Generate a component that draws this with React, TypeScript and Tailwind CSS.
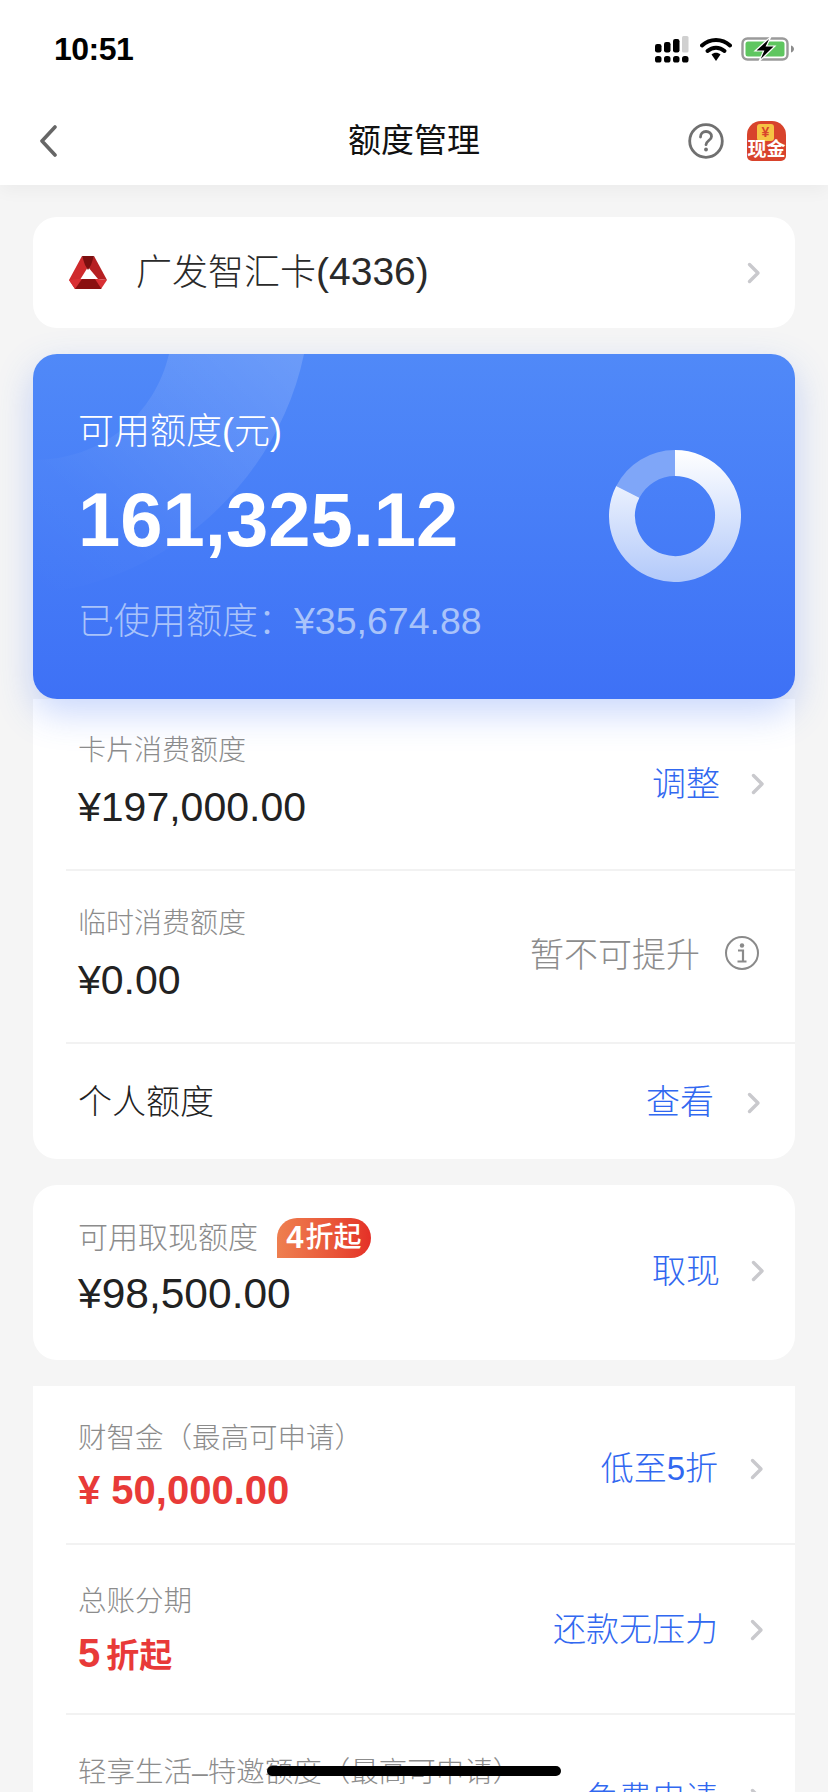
import React from "react";

const blue = "text-[#3168f0]";

function Chevron({ className = "" }: { className?: string }) {
  return (
    <svg viewBox="0 0 14 22" className={`w-[14px] h-[22px] shrink-0 ${className}`} fill="none">
      <path d="M2.5 2.5 11 11 2.5 19.5" stroke="#c9c9cd" strokeWidth="3.4" strokeLinecap="round" strokeLinejoin="round" />
    </svg>
  );
}

function Signal() {
  return (
    <svg viewBox="0 0 34 27" className="w-[34px] h-[27px]">
      <rect x="0" y="8" width="6.500" height="8.500" rx="2.200" fill="#000" />
      <rect x="9" y="6" width="6.500" height="10.500" rx="2.200" fill="#000" />
      <rect x="18" y="3" width="6.500" height="13.500" rx="2.200" fill="#000" />
      <rect x="27" y="0" width="6.500" height="16.500" rx="1.500" fill="#d0d0d0" />
      <rect x="0" y="20" width="6.500" height="6.500" rx="2.600" fill="#000" />
      <rect x="9" y="20" width="6.500" height="6.500" rx="2.600" fill="#000" />
      <rect x="18" y="20" width="6.500" height="6.500" rx="2.600" fill="#000" />
      <rect x="27" y="20" width="6.500" height="6.500" rx="2.600" fill="#000" />
    </svg>
  );
}

function Wifi() {
  return (
    <svg viewBox="0 0 32 24" className="w-[32px] h-[24px]" fill="none">
      <path d="M2 8.500C10 1 22 1 30 8.500" stroke="#000" strokeWidth="4" strokeLinecap="round" />
      <path d="M7.500 14C12.500 9.600 19.500 9.600 24.500 14" stroke="#000" strokeWidth="4" strokeLinecap="round" />
      <path d="M11.500 17.500 16 24l4.500-6.500C18 15.200 14 15.200 11.500 17.500Z" fill="#000" />
    </svg>
  );
}

function Battery() {
  return (
    <svg viewBox="0 0 54 26" className="w-[54px] h-[26px]">
      <rect x="1.500" y="2.500" width="45" height="21" rx="5" fill="#fff" stroke="#9a9a9a" strokeWidth="2.400" />
      <rect x="4.500" y="5.500" width="39" height="15" rx="2.500" fill="#5fc660" />
      <path d="M50 9.500c2 .6 3 2 3 3.500s-1 2.900-3 3.500z" fill="#8c8c8c" />
      <path d="M30 0.500 14 15h8.500L18 25.500 34 10h-8.500l4.500-9.500z" fill="#000" stroke="#fff" strokeWidth="1.200" />
    </svg>
  );
}

function BankLogo() {
  return (
    <svg viewBox="0 0 38 34" className="w-[38px] h-[34px] shrink-0">
      <polygon points="13,0 19,11 9,27 6,33 0,24" fill="#cf2a2c" />
      <polygon points="25,0 38,24 29,23 19,11" fill="#b62022" />
      <polygon points="9,23 29,23 38,24 32,33 6,33 0,24" fill="#d93034" />
      <polygon points="13,0 25,0 22,9 19,14 16,9" fill="#7c0f0f" />
      <polygon points="13,23 26,23 32.500,33 6,33" fill="#8a1010" />
      <polygon points="19.300,14 14,23 25,23" fill="#fff" />
    </svg>
  );
}

function CashIcon() {
  return (
    <div className="relative w-[39px] h-[40px] shrink-0 rounded-t-[14px] rounded-b-[5px] bg-[#d8432c]">
      <div className="absolute left-[10px] top-[3px] w-[17px] h-[17px] rounded-[3px] bg-[#f6c344] text-[#d8432c] text-[14px] leading-[17px] text-center font-bold">
        ¥
      </div>
      <div className="absolute left-0 bottom-[1px] w-[39px] text-center text-white text-[19px] leading-[21px] font-bold whitespace-nowrap">
        现金
      </div>
    </div>
  );
}

function Donut() {
  return (
    <svg viewBox="0 0 132 132" className="w-[132px] h-[132px] mb-[22px]" fill="none">
      <defs>
        <linearGradient id="ring" gradientUnits="userSpaceOnUse" x1="0" y1="0" x2="0" y2="132">
          <stop offset="0" stopColor="#ffffff" />
          <stop offset="1" stopColor="#b2c9fa" />
        </linearGradient>
      </defs>
      <path d="M18.800 41.900A53 53 0 0 1 66 13" stroke="#7fa6f8" strokeWidth="26" />
      <path d="M66 13A53 53 0 1 1 18.800 41.900" stroke="url(#ring)" strokeWidth="26" />
    </svg>
  );
}

function InfoRow({
  label,
  value,
  right,
  rowClass,
  shiftClass,
  labelClass = "text-[28px]",
  valueClass = "text-[41px] leading-[56px] text-[#222222]",
  badge,
}: {
  label: string;
  value?: React.ReactNode;
  right: React.ReactNode;
  rowClass: string;
  shiftClass: string;
  labelClass?: string;
  valueClass?: string;
  badge?: boolean;
}) {
  return (
    <div className={`flex items-center justify-between pl-[45px] ${rowClass}`}>
      <div className={shiftClass}>
        <div className={`flex items-center gap-[19px] leading-[56px] text-[#8c8c8c] font-light ${labelClass}`}>
          <span>{label}</span>
          {badge && (
            <span className="w-[94px] h-[40px] flex items-center justify-center rounded-t-[20px] rounded-br-[20px] bg-gradient-to-r from-[#ee7f50] to-[#e42f27] text-white text-[28px] leading-[40px] font-medium">
              <span className="font-bold text-[31px] mr-[2px]">4</span>折起
            </span>
          )}
        </div>
        {value && <div className={valueClass}>{value}</div>}
      </div>
      {right}
    </div>
  );
}

function Action({ text, className, chevronClass = "mr-[30px]" }: { text: string; className: string; chevronClass?: string }) {
  return (
    <div className="flex items-center">
      <span className={`${blue} font-light ${className}`}>{text}</span>
      <Chevron className={chevronClass} />
    </div>
  );
}

export default function App() {
  const redValue = "text-[40px] leading-[48px] font-bold text-[#e83a38]";
  return (
    <div className="relative w-[828px] h-[1792px] overflow-hidden bg-[#f5f5f5] text-[#222222] font-['Liberation_Sans','Noto_Sans_CJK_SC',sans-serif]">
      <header className="relative z-10 bg-white shadow-[0_6px_16px_rgba(0,0,0,0.04)]">
        <div className="h-[96px] pt-[2px] flex items-center justify-between pl-[54px] pr-[33px]">
          <span className="text-[32px] font-bold text-[#000000] tracking-[-0.5px]">10:51</span>
          <div className="flex items-center">
            <Signal />
            <div className="ml-[11px] mr-[9px] flex">
              <Wifi />
            </div>
            <Battery />
          </div>
        </div>
        <div className="relative h-[89px] flex items-center justify-between pl-[38px] pr-[42px]">
          <svg viewBox="0 0 20 32" className="w-[20px] h-[32px]" fill="none">
            <path d="M17 2 4 16l13 14" stroke="#666666" strokeWidth="3.600" strokeLinecap="round" strokeLinejoin="round" />
          </svg>
          <h1 className="absolute left-0 right-0 text-center text-[33px] leading-[44px] font-normal text-[#111111]">
            额度管理
          </h1>
          <div className="flex items-center gap-[23px]">
            <svg viewBox="0 0 36 36" className="w-[36px] h-[36px]" fill="none">
              <circle cx="18" cy="18" r="16.300" stroke="#707070" strokeWidth="2.800" />
              <path d="M12.500 14c0-3.400 2.400-5.500 5.500-5.500s5.500 2 5.500 4.900c0 4-5.500 4.200-5.500 8.300" stroke="#707070" strokeWidth="2.800" strokeLinecap="round" />
              <circle cx="18" cy="26.500" r="1.900" fill="#707070" />
            </svg>
            <CashIcon />
          </div>
        </div>
      </header>

      <main className="px-[33px] pt-[32px]">
        <div className="h-[111px] bg-white rounded-[24px] flex items-center justify-between pl-[36px] pr-[34px]">
          <div className="flex items-center gap-[29px]">
            <BankLogo />
            <span className="text-[36px] font-light text-[#2a2a2a]">
              广发智汇卡<span className="text-[39px]">(4336)</span>
            </span>
          </div>
          <Chevron />
        </div>

        <section className="relative z-[1] mt-[26px] h-[345px] rounded-[24px] overflow-hidden bg-gradient-to-b from-[#5089f8] to-[#3e71f6] shadow-[0_14px_36px_rgba(62,113,246,0.28)] flex items-center justify-between pl-[45px] pr-[54px]">
          <svg viewBox="0 0 280 240" className="absolute left-0 top-0 w-[280px] h-[240px]">
            <defs>
              <linearGradient id="arc" x1="1" y1="0" x2="0" y2="1">
                <stop offset="0" stopColor="#ffffff" stopOpacity="0.16" />
                <stop offset="0.7" stopColor="#ffffff" stopOpacity="0.02" />
                <stop offset="1" stopColor="#ffffff" stopOpacity="0" />
              </linearGradient>
            </defs>
            <path d="M136 0C122 60 70 106 0 106L0 240C130 230 244 130 271 0Z" fill="url(#arc)" />
          </svg>
          <div className="relative self-start pt-[54px]">
            <div className="text-[36px] leading-[48px] text-white font-light">可用额度(元)</div>
            <div className="mt-[22px] text-[76px] leading-[84px] font-bold text-white">161,325.12</div>
            <div className="mt-[35px] text-[36px] leading-[48px] text-[#a9c3fa] font-light">
              已使用额度：<span className="text-[37.5px]">¥35,674.88</span>
            </div>
          </div>
          <Donut />
        </section>

        <div className="bg-white rounded-b-[24px]">
          <InfoRow
            label="卡片消费额度"
            value="¥197,000.00"
            rowClass="h-[170px]"
            shiftClass="mb-[11px]"
            right={<Action text="调整" className="text-[34px] mr-[31px]" />}
          />
          <div className="ml-[33px] border-t-2 border-[#f2f2f2]" />
          <InfoRow
            label="临时消费额度"
            value="¥0.00"
            rowClass="h-[171px]"
            shiftClass="mb-[10px]"
            right={
              <div className="flex items-center mb-[3px]">
                <span className="text-[34px] text-[#8c8c8c] font-light">暂不可提升</span>
                <svg viewBox="0 0 36 36" className="w-[36px] h-[36px] ml-[24px] mr-[35px] mb-[4px]" fill="none">
                  <circle cx="18" cy="18" r="16" stroke="#8a8a8a" strokeWidth="2" />
                  <circle cx="18" cy="10.500" r="2.200" fill="#8a8a8a" />
                  <path d="M14 15.500h5v11M13.500 26.500h9" stroke="#8a8a8a" strokeWidth="2.200" />
                </svg>
              </div>
            }
          />
          <div className="ml-[33px] border-t-2 border-[#f2f2f2]" />
          <div className="h-[115px] pt-[2px] flex items-center justify-between pl-[45px]">
            <span className="text-[34px] font-light text-[#222222]">个人额度</span>
            <Action text="查看" className="text-[34px] mr-[33px]" chevronClass="mr-[34px]" />
          </div>
        </div>

        <div className="mt-[26px] bg-white rounded-[24px]">
          <InfoRow
            label="可用取现额度"
            value="¥98,500.00"
            badge
            labelClass="text-[30px]"
            valueClass="text-[42.5px] leading-[56px] text-[#222222]"
            rowClass="h-[175px]"
            shiftClass="mb-[14px]"
            right={
              <div className="mb-[3px]">
                <Action text="取现" className="text-[34px] mr-[31px]" />
              </div>
            }
          />
        </div>

        <div className="mt-[26px] bg-white">
          <InfoRow
            label="财智金（最高可申请）"
            value="¥ 50,000.00"
            labelClass="text-[28.5px]"
            rowClass="h-[157px]"
            shiftClass="mb-[5px]"
            valueClass={redValue}
            right={
              <div className="pt-[9px]">
                <Action text="低至5折" className="text-[33px] mr-[32px]" chevronClass="mr-[31px]" />
              </div>
            }
          />
          <div className="ml-[33px] border-t-2 border-[#f2f2f2]" />
          <InfoRow
            label="总账分期"
            value={
              <span>
                5<span className="text-[33px] ml-[6px]">折起</span>
              </span>
            }
            labelClass="text-[28.5px]"
            rowClass="h-[168px]"
            shiftClass="mb-[6px]"
            valueClass={redValue}
            right={
              <div className="pt-[2px]">
                <Action text="还款无压力" className="text-[33px] mr-[32px]" chevronClass="mr-[31px]" />
              </div>
            }
          />
          <div className="ml-[33px] border-t-2 border-[#f2f2f2]" />
          <InfoRow
            label="轻享生活–特邀额度（最高可申请）"
            labelClass="text-[28.5px]"
            rowClass="h-[168px]"
            shiftClass="mb-[55px]"
            right={<Action text="免费申请" className="text-[33px] mr-[32px]" chevronClass="mr-[31px]" />}
          />
        </div>
      </main>

      <div className="absolute z-20 left-[267px] top-[1766px] w-[294px] h-[10px] rounded-full bg-black" />
    </div>
  );
}
